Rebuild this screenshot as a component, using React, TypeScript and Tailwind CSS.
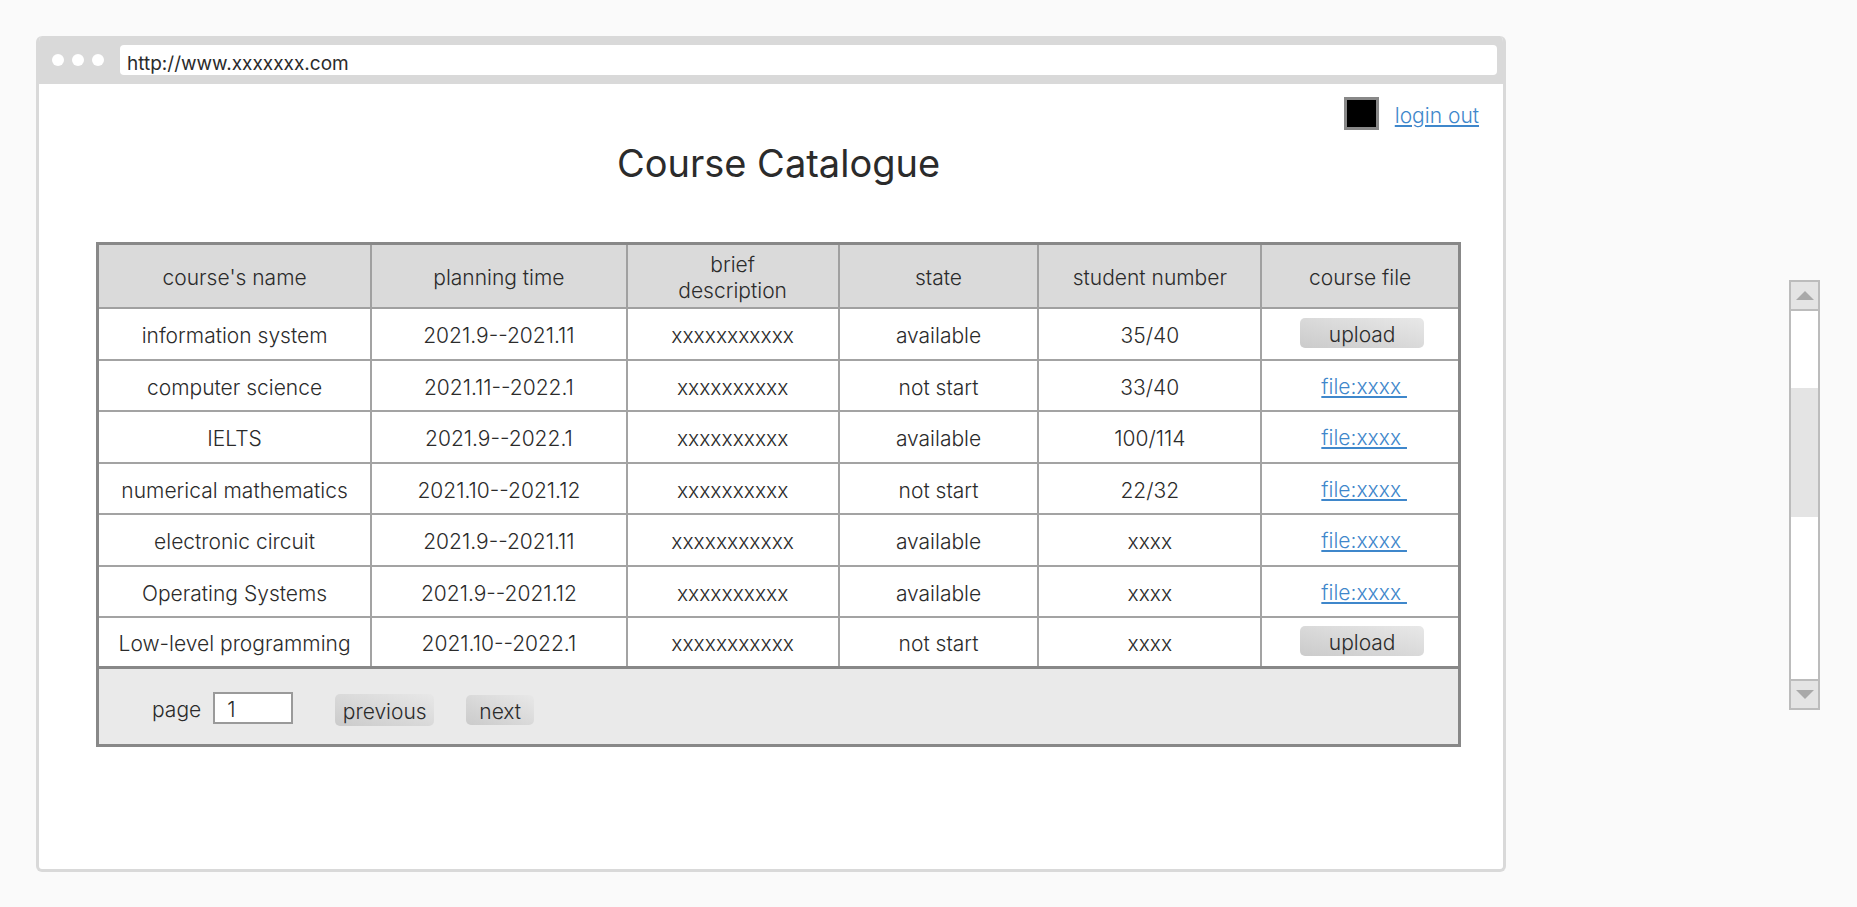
const columns = [
  { title: "course's name", width: 'w-[20.1%]' },
  { title: 'planning time', width: 'w-[18.8%]' },
  { title: 'brief description', width: 'w-[15.6%]' },
  { title: 'state', width: 'w-[14.7%]' },
  { title: 'student number', width: 'w-[16.4%]' },
  { title: 'course file', width: 'w-[14.4%]' },
];

const courses = [
  ['information system', '2021.9--2021.11', 'xxxxxxxxxxx', 'available', '35/40', ''],
  ['computer science', '2021.11--2022.1', 'xxxxxxxxxx', 'not start', '33/40', 'file:xxxx'],
  ['IELTS', '2021.9--2022.1', 'xxxxxxxxxx', 'available', '100/114', 'file:xxxx'],
  ['numerical mathematics', '2021.10--2021.12', 'xxxxxxxxxx', 'not start', '22/32', 'file:xxxx'],
  ['electronic circuit', '2021.9--2021.11', 'xxxxxxxxxxx', 'available', 'xxxx', 'file:xxxx'],
  ['Operating Systems', '2021.9--2021.12', 'xxxxxxxxxx', 'available', 'xxxx', 'file:xxxx'],
  ['Low-level programming', '2021.10--2022.1', 'xxxxxxxxxxx', 'not start', 'xxxx', ''],
];

const buttonLook = 'rounded-[5px] bg-linear-to-tr from-[#cbcbcb] to-[#e8e8e8]';

function BrowserBar() {
  return (
    <header className="flex h-12 items-center bg-[#d9d9d9] pl-[13px] pr-1.5">
      <div className="flex gap-2">
        <span className="size-3 rounded-full bg-white" />
        <span className="size-3 rounded-full bg-white" />
        <span className="size-3 rounded-full bg-white" />
      </div>
      <input
        aria-label="Address"
        defaultValue="http://www.xxxxxxx.com"
        className="ml-4 h-[30px] min-w-0 flex-1 rounded bg-white px-[7px] pt-1.5 text-[19px] font-normal outline-none"
      />
    </header>
  );
}

function CourseTable() {
  return (
    <table className="w-full table-fixed border-separate border-spacing-0 text-center">
      <thead>
        <tr className="h-[64px] bg-[#dadada]">
          {columns.map((c) => (
            <th
              key={c.title}
              scope="col"
              className={`${c.width} border-r-2 border-b-2 border-[#a0a0a0] px-8 pt-1 leading-[26px] font-light whitespace-nowrap last:border-r-0 nth-3:whitespace-normal`}
            >
              {c.title}
            </th>
          ))}
        </tr>
      </thead>
      <tbody>
        {courses.map((row) => (
          <tr key={row[0]} className="group h-[51px] odd:h-[52px] last:h-12!">
            {row.slice(0, 5).map((cell, i) => (
              <td
                key={i}
                className="border-r-2 border-b-2 border-[#a3a3a3] pt-1 leading-[26px] whitespace-nowrap group-last:border-b-0"
              >
                {cell}
              </td>
            ))}
            <td className="border-b-2 border-[#a3a3a3] pt-0.5 pl-1 leading-[26px] group-last:border-b-0">
              {row[5] ? (
                <a href="#file" className="ml-1 whitespace-pre text-[#3f87cb] underline underline-offset-2">
                  {row[5] + '\u00a0'}
                </a>
              ) : (
                <button type="button" className={`${buttonLook} mb-1 h-[30px] w-[124px] pt-1 align-middle leading-[26px]`}>
                  upload
                </button>
              )}
            </td>
          </tr>
        ))}
      </tbody>
    </table>
  );
}

function Pager() {
  return (
    <div className="flex h-[78px] items-center border-t-3 border-[#888] bg-[#eaeaea] pt-0.5 pl-[53px]">
      <label htmlFor="page" className="pt-1">
        page
      </label>
      <input
        id="page"
        defaultValue="1"
        className="ml-3 h-8 w-20 border-2 border-[#9a9a9a] bg-white px-3 pt-1 outline-none"
      />
      <button type="button" className={`${buttonLook} mt-1 ml-[42px] h-8 w-[99px] pt-1 leading-[26px]`}>
        previous
      </button>
      <button type="button" className={`${buttonLook} mt-1 ml-8 h-[30px] w-[68px] pt-1 leading-[26px]`}>
        next
      </button>
    </div>
  );
}

function ScrollBar() {
  return (
    <div className="mt-[244px] flex h-[430px] w-[31px] flex-col self-start border-2 border-[#bcbcbc] bg-white">
      <button type="button" aria-label="Scroll up" className="flex h-[29px] items-center justify-center border-b-2 border-[#bcbcbc] bg-[#e4e4e4]">
        <svg width="18" height="9" viewBox="0 0 18 9" className="fill-[#a9a9a9]">
          <path d="M0 9 9 0l9 9z" />
        </svg>
      </button>
      <div className="flex-1 pt-[77px]">
        <div className="h-[129px] bg-[#e4e4e4]" />
      </div>
      <button type="button" aria-label="Scroll down" className="flex h-[29px] items-center justify-center border-t-2 border-[#bcbcbc] bg-[#e4e4e4]">
        <svg width="18" height="9" viewBox="0 0 18 9" className="fill-[#a9a9a9]">
          <path d="M0 0h18L9 9z" />
        </svg>
      </button>
    </div>
  );
}

export default function App() {
  return (
    <div className="flex min-h-screen items-stretch justify-between bg-[#fafafa] pt-9 pr-[37px] pb-[35px] pl-9 font-['Inter','Liberation_Sans',sans-serif] text-[21px] font-light text-[#2b2b2b]">
      <div className="w-[82.4%] overflow-hidden rounded-md border-3 border-t-0 border-[#d9d9d9] bg-white">
        <BrowserBar />
        <main className="pr-[42px] pb-16 pl-[57px]">
          <div className="-mr-[18px] flex items-start justify-end gap-4 pt-[13px]">
            <span className="h-[33px] w-[35px] border-3 border-[#888] bg-black" />
            <a href="#logout" className="pt-1 leading-[30px] text-[#3f87cb] underline underline-offset-2">
              login out
            </a>
          </div>
          <h1 className="pt-2 text-center text-[38px] leading-[48px] font-normal">Course Catalogue</h1>
          <section className="mt-[55px] border-3 border-[#888]">
            <CourseTable />
            <Pager />
          </section>
        </main>
      </div>
      <ScrollBar />
    </div>
  );
}
